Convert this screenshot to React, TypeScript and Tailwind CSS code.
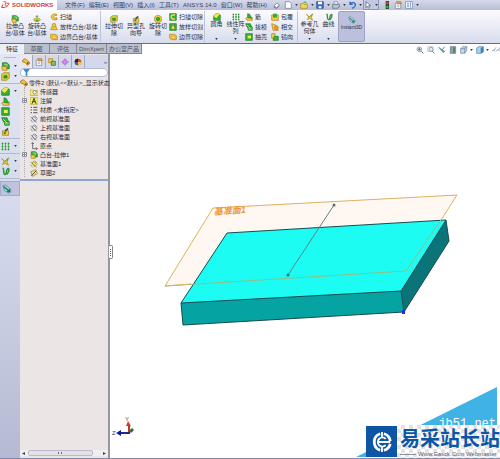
import clsx from 'clsx';
import { ReactNode } from 'react';

type IconName =
  | 'extrude'
  | 'revolve'
  | 'sweep'
  | 'loft'
  | 'boundary'
  | 'cut'
  | 'hole'
  | 'revolveCut'
  | 'sweepCut'
  | 'loftCut'
  | 'fillet'
  | 'pattern'
  | 'rib'
  | 'draft'
  | 'shell'
  | 'wrap'
  | 'intersect'
  | 'mirror'
  | 'reference'
  | 'curve'
  | 'instant'
  | 'help'
  | 'new'
  | 'open'
  | 'save'
  | 'print'
  | 'undo'
  | 'select'
  | 'light'
  | 'props'
  | 'options'
  | 'part'
  | 'config'
  | 'target'
  | 'display'
  | 'sensor'
  | 'note'
  | 'material'
  | 'plane'
  | 'origin'
  | 'plane1'
  | 'sketch'
  | 'zoomFit'
  | 'zoomArea'
  | 'prevView'
  | 'section'
  | 'orient'
  | 'style'
  | 'hide';

const green = '#35b034';
const darkGreen = '#1c7a28';
const yellow = '#f2cf3a';
const gold = '#a5801a';

const planeShape = (color: string, fill: string) => (
  <g stroke={color} fill={fill}>
    <path d="M3 4l3-2 4 5-3 3z" />
    <path d="M1 3l9 8M1 7l3 4M7 1l4 4" />
  </g>
);

const shapes: Record<IconName, ReactNode> = {
  extrude: (
    <>
      <path d="M2 1h6l3 3v5H5L2 6z" fill={green} stroke={darkGreen} />
      <path d="M1 6h6l1 5H2z" fill={yellow} stroke={gold} />
      <path d="M4 3h4v3" stroke="#c9f2b5" fill="none" />
    </>
  ),
  revolve: (
    <>
      <path d="M6 1v3M4 3l2-2 2 2" stroke={darkGreen} fill="none" />
      <path d="M1 7c0-3 10-3 10 0s-10 3-10 0z" fill={yellow} stroke={gold} />
      <path d="M4 7h4v3H4z" fill={green} />
    </>
  ),
  sweep: (
    <>
      <path d="M10 2C4 0 1 4 2 7s5 4 8 3V7C7 8 5 7 6 5s3-1 4-1z" fill={yellow} stroke={gold} />
      <circle cx="10" cy="8.500" r="1.500" fill="#e98a1d" />
    </>
  ),
  loft: (
    <>
      <path d="M4 1h4l1 5 2 4H1l2-4z" fill={yellow} stroke={gold} />
      <path d="M4 6h4" stroke={gold} />
    </>
  ),
  boundary: (
    <>
      <path d="M1 2h7l3 2v6H4L1 8z" fill={yellow} stroke={gold} />
      <path d="M4 5h5v3H4z" fill="#fff7c2" stroke="#e98a1d" />
    </>
  ),
  cut: (
    <>
      <path d="M1 3l3-2h7v7l-3 3H1z" fill="#d9d13c" stroke={gold} />
      <path d="M4 5h4v3H4z" fill={green} stroke={darkGreen} />
    </>
  ),
  hole: (
    <>
      <path d="M2 5h8v6H2z" fill={yellow} stroke={gold} />
      <path d="M5 4l4-3 1 2-4 4z" fill="#4a5340" />
      <circle cx="5" cy="8" r="1.500" fill="#47702a" />
    </>
  ),
  revolveCut: (
    <>
      <path d="M1 3c2-3 8-3 10 0v6c-2 3-8 3-10 0z" fill="#e4d83f" stroke={gold} />
      <circle cx="6" cy="6" r="2.500" fill={green} stroke={darkGreen} />
    </>
  ),
  sweepCut: (
    <>
      <path d="M1 1h10v10H1z" fill={green} stroke={darkGreen} />
      <path d="M9 3C3 2 2 6 4 8s4 1 5 1" stroke="#f6e65a" strokeWidth="2" fill="none" />
    </>
  ),
  loftCut: (
    <>
      <path d="M1 1h10v10H1z" fill={green} stroke={darkGreen} />
      <path d="M6 2l3 7H3z" fill="#eef08a" stroke={gold} />
    </>
  ),
  fillet: (
    <>
      <path d="M1 5c1-4 7-5 10-2v8H1z" fill={green} stroke={darkGreen} />
      <path d="M1 5c1-4 6-5 9-3L5 8z" fill="#f5e548" />
    </>
  ),
  pattern: (
    <g fill={darkGreen}>
      <path d="M1 1h2v2H1zM5 1h2v2H5zM9 1h2v2H9zM1 5h2v2H1zM5 5h2v2H5zM9 5h2v2H9zM1 9h2v2H1zM5 9h2v2H5zM9 9h2v2H9z" />
      <path d="M2 2v8M6 2v8M10 2v8" stroke={green} />
    </g>
  ),
  rib: (
    <>
      <path d="M1 8l4-2 6 1v4H3z" fill={yellow} stroke={gold} />
      <path d="M4 1l3 1 3 6-6-1z" fill={green} stroke={darkGreen} />
    </>
  ),
  draft: (
    <>
      <path d="M1 1h7l2 5H3z" fill={green} stroke={darkGreen} />
      <path d="M4 6h7v5H5z" fill="#60cf4b" stroke={darkGreen} />
      <path d="M3 3l5 5" stroke="#e4f7b0" />
    </>
  ),
  shell: (
    <>
      <path d="M1 1h10v10H1z" fill={green} stroke={darkGreen} />
      <path d="M4 4h5v4H4z" fill="#e8ef5c" />
    </>
  ),
  wrap: (
    <>
      <path d="M1 3h10v8H1z" fill={yellow} stroke={gold} />
      <path d="M3 1h6v6H3z" fill={green} />
    </>
  ),
  intersect: (
    <>
      <path d="M1 1l6 2 4 8H3z" fill={yellow} stroke="#b76b18" />
      <circle cx="8" cy="7" r="3" fill="#ee9b25" stroke={gold} />
    </>
  ),
  mirror: (
    <>
      <path d="M1 1h5v7H1z" fill={yellow} stroke={gold} />
      <path d="M5 5h6v6H3z" fill={green} stroke={darkGreen} />
    </>
  ),
  reference: (
    <>
      <path d="M1 2l4 4 5-5-2 6 2 4-5-3-3 2 2-4z" fill={yellow} stroke={gold} />
      <path d="M5 6l5-4" stroke="#4c9c36" />
    </>
  ),
  curve: (
    <path
      d="M2 2c3-1 0 7 3 8s1-8 5-8c2 3-1 5-2 8"
      stroke="#2c9a35"
      strokeWidth="2"
      fill="none"
    />
  ),
  instant: (
    <>
      <path d="M1 2l3-1 7 6-2 4-6-3z" fill="#a8dbe0" stroke="#548fa6" />
      <path d="M2 3l7 6M9 6v3H6" stroke="#1b7b4b" strokeWidth="1.500" fill="none" />
    </>
  ),
  help: (
    <>
      <path d="M2 6l5-4 4 3-5 5z" fill="#fff" stroke="#55617a" />
      <path d="M2 7v2l4 2 5-5" stroke="#3c485e" fill="none" />
    </>
  ),
  new: <path d="M2 1h6l3 3v7H2z" fill="#fff" stroke="#69758f" />,
  open: (
    <>
      <path d="M1 4h4l1 1h5v6H1z" fill="#f5d84d" stroke={gold} />
      <path d="M5 3c1-2 4-2 5 0" stroke={green} strokeWidth="1.500" fill="none" />
    </>
  ),
  save: (
    <>
      <path d="M1 1h10v10H1z" fill="#3f72c4" stroke="#234a8c" />
      <path d="M3 1h6v4H3zM4 8h4v3H4z" fill="#fff" />
    </>
  ),
  print: (
    <>
      <path d="M3 1h5l1 4H3z" fill="#fff" stroke="#77839b" />
      <path d="M1 5h10v4l-3 2H1z" fill="#b9c4d6" stroke="#5a6780" />
    </>
  ),
  undo: (
    <path
      d="M3 1v4h4M3 5c2-4 8-3 8 1s-3 4-5 5"
      stroke="#2c6cc2"
      strokeWidth="2"
      fill="none"
    />
  ),
  select: <path d="M3 1v9l2-2 2 3 1-1-1-3h3z" fill="#fff" stroke="#46527a" />,
  light: (
    <>
      <path d="M4 0h5v12H4z" fill="#2d4934" />
      <circle cx="6.500" cy="3" r="2" fill="#e33b2e" />
      <circle cx="6.500" cy="9" r="2" fill="#35b034" />
    </>
  ),
  props: (
    <>
      <path d="M2 3h8v8H2z" fill="#fff" stroke="#7c7f8c" />
      <path d="M4 1h6l1 3H5z" fill="#f0b04a" stroke="#a86d20" />
      <path d="M4 6h4M4 8h4" stroke="#8994aa" />
    </>
  ),
  options: (
    <>
      <path d="M1 1h10v10H1z" fill="#fff" stroke="#5c7fae" />
      <path d="M3 4h3M3 6h3M3 8h3M8 2v8" stroke="#4a75b4" />
    </>
  ),
  part: (
    <>
      <path d="M1 3l4-2 3 3 3 2v3l-3 2-3-4-4-1z" fill="#f4c53a" stroke="#80601a" />
      <circle cx="8.500" cy="8" r="1.500" fill="#7a4e15" />
    </>
  ),
  config: (
    <>
      <path d="M1 1h6v6H1z" fill={yellow} stroke={gold} />
      <path d="M5 5h6v6H5z" fill="#7ec769" stroke="#36523a" />
    </>
  ),
  target: (
    <>
      <path d="M6 0v12M0 6h12" stroke="#a865ce" />
      <circle cx="6" cy="6" r="3.500" fill="#d58be6" stroke="#9a62c4" />
    </>
  ),
  display: (
    <>
      <circle cx="6" cy="6" r="5" fill="#e8442c" />
      <path d="M6 6V1a5 5 0 0 0-5 5z" fill="#242424" />
      <path d="M6 6h5a5 5 0 0 1-5 5z" fill="#f4c52f" />
      <path d="M6 6v5a5 5 0 0 1-5-5z" fill="#3b60c4" />
    </>
  ),
  sensor: (
    <>
      <path d="M0 3h4l1 1h7v7H0z" fill="#f8ee8c" stroke="#a39a35" />
      <circle cx="7" cy="6.500" r="2.500" fill="#fff" stroke="#56624a" />
    </>
  ),
  note: (
    <>
      <path d="M0 1h12v10H0z" fill="#f7ee59" stroke="#b0a635" />
      <path d="M3 10l3-8 3 8M4 7h4" stroke="#3b4130" fill="none" strokeWidth="1.500" />
    </>
  ),
  material: (
    <path
      d="M1 2h2M1 6h2M1 10h2M5 2h6M5 6h6M5 10h6"
      stroke="#4c5160"
      strokeWidth="1.500"
    />
  ),
  plane: planeShape('#5c6474', 'none'),
  origin: <path d="M4 1v9h7M2 3l2-2 2 2M9 8l2 2-2 2" stroke="#333a4a" fill="none" />,
  plane1: planeShape('#8b7a22', '#f5e65a'),
  sketch: (
    <>
      <path d="M1 4l8-3 2 6-7 4z" fill="#f4e37a" stroke="#8b7a22" />
      <path d="M2 10l7-7" stroke="#4a5166" strokeWidth="1.500" />
    </>
  ),
  zoomFit: (
    <>
      <circle cx="5" cy="5" r="3.500" fill="#e8eef6" stroke="#6c7b92" />
      <path d="M8 8l3 3M3 5h4M5 3v4" stroke="#5f7391" strokeWidth="1.500" />
    </>
  ),
  zoomArea: (
    <>
      <path d="M1 1h8v7H1z" fill="none" stroke="#aab3c3" />
      <circle cx="6" cy="5" r="3" fill="#e8eef6" stroke="#6c7b92" />
      <path d="M8 8l3 3" stroke="#5f7391" strokeWidth="1.500" />
    </>
  ),
  prevView: (
    <>
      <path d="M1 2l7 8 2-2-6-4z" fill="#73aace" stroke="#4680a8" />
      <path d="M10 1L6 6" stroke="#3f9d96" strokeWidth="1.500" />
    </>
  ),
  section: (
    <>
      <path d="M2 1h8v10H2z" fill="#8fa4a1" stroke="#5e7372" />
      <path d="M6 2h3v8H6z" fill="#64807e" />
    </>
  ),
  orient: (
    <>
      <path d="M1 4l3-3h6v6l-3 4H1z" fill="#c6d9ea" stroke="#5b7c9e" />
      <path d="M1 4h6v7M7 4l3-3" stroke="#5b7c9e" fill="none" />
    </>
  ),
  style: (
    <>
      <path d="M1 3l3-2h7v8l-3 2H1z" fill="#a8d2ee" stroke="#4a7ea8" />
      <path d="M7 3l4-2v8l-4 2z" fill="#3f83bd" />
    </>
  ),
  hide: (
    <path
      d="M0 8c1-3 3-3 4 0M6 8c1-3 4-3 5 0M3 7l3-5M10 6l2-4"
      stroke="#74808f"
      fill="none"
    />
  ),
};

const Icon = ({ name, className }: { name: IconName; className?: string }) => (
  <svg viewBox="0 0 12 12" className={clsx('shrink-0', className ?? 'size-2')} aria-hidden>
    {shapes[name]}
  </svg>
);

const Caret = () => (
  <svg viewBox="0 0 4 3" className="h-[2px] w-[3px] shrink-0" aria-hidden>
    <path d="M0 0h4L2 3z" fill="#333a4a" />
  </svg>
);

const menus = ['文件(F)', '编辑(E)', '视图(V)', '插入(I)', '工具(T)', 'ANSYS 14.0', '窗口(W)', '帮助(H)'];

const quickTools: { icon: IconName; active?: boolean }[] = [
  { icon: 'new' },
  { icon: 'open' },
  { icon: 'save' },
  { icon: 'print' },
  { icon: 'undo' },
  { icon: 'select', active: true },
];

const TitleBar = () => (
  <header className="flex h-[10px] items-center bg-linear-to-b from-[#d5d9ea] to-[#b9bed6]">
    <div className="flex h-full w-[57px] shrink-0 items-center gap-[2px] bg-white pl-px text-[#cf3a32]">
      <svg viewBox="0 0 14 12" className="h-2 w-[9px]" aria-hidden>
        <path
          d="M4 1h3c2 1 1 3-1 4 3 1 2 5-1 5H1l2-5M9 4c3-2 5 0 3 1s-2 4-4 4"
          stroke="#cf3a32"
          strokeWidth="1.500"
          fill="none"
        />
      </svg>
      <span className="text-[6px] font-bold">SOLIDWORKS</span>
    </div>
    <nav className="flex w-[216px] shrink-0 items-center justify-between pr-[6px] pl-2 whitespace-nowrap text-[#39415c]">
      {menus.map(menu => (
        <button key={menu} type="button">
          {menu}
        </button>
      ))}
    </nav>
    <Icon name="help" className="mr-[3px] size-[7px]" />
    <div className="flex h-full items-center">
      {quickTools.map(({ icon, active }) => (
        <button
          key={icon}
          type="button"
          aria-label={icon}
          className={clsx(
            'flex h-full w-[16px] items-center justify-center gap-[3px]',
            active && 'border border-t-0 border-[#8f95b8] bg-[#c3c8e2]'
          )}
        >
          <Icon name={icon} />
          <Caret />
        </button>
      ))}
    </div>
    <div className="ml-[4px] flex items-center gap-[3px]">
      <Icon name="light" />
      <Icon name="props" />
      <Icon name="options" />
      <Caret />
    </div>
  </header>
);

type Tool = { icon: IconName; label: string };

const LargeTool = ({ icon, label, caret }: Tool & { caret?: boolean }) => (
  <button
    type="button"
    className={clsx(
      'flex h-full w-[22px] flex-col items-center text-center',
      caret ? 'pt-[2px]' : 'pt-[4px]'
    )}
  >
    <Icon name={icon} />
    <span className="leading-[7px] whitespace-pre">{label}</span>
    {caret && (
      <span className="mt-auto mb-[2px] flex">
        <Caret />
      </span>
    )}
  </button>
);

const ToolStack = ({ tools, className }: { tools: Tool[]; className: string }) => (
  <div className={clsx('flex h-full flex-col justify-between pt-[2px] pb-px', className)}>
    {tools.map(({ icon, label }) => (
      <button key={label} type="button" className="flex items-center gap-[2px] whitespace-nowrap">
        <Icon name={icon} />
        {label}
      </button>
    ))}
  </div>
);

const Divider = () => <div className="mx-[2px] h-full w-px shrink-0 bg-[#bfc3d6]" />;

const Ribbon = () => (
  <div className="flex h-[34px] items-center border-b border-[#666b8b] bg-linear-to-b from-[#fbfbfe] to-[#d9dcec] py-px pl-[4px] text-[#2b3042]">
    <LargeTool icon="extrude" label={'拉伸凸\n台/基体'} />
    <LargeTool icon="revolve" label={'旋转凸\n台/基体'} />
    <ToolStack
      className="w-[50px] pl-[2px]"
      tools={[
        { icon: 'sweep', label: '扫描' },
        { icon: 'loft', label: '放样凸台/基体' },
        { icon: 'boundary', label: '边界凸台/基体' },
      ]}
    />
    <Divider />
    <LargeTool icon="cut" label={'拉伸切\n除'} />
    <LargeTool icon="hole" label={'异型孔\n向导'} />
    <LargeTool icon="revolveCut" label={'旋转切\n除'} />
    <ToolStack
      className="w-[33px]"
      tools={[
        { icon: 'sweepCut', label: '扫描切除' },
        { icon: 'loftCut', label: '放样切割' },
        { icon: 'boundary', label: '边界切除' },
      ]}
    />
    <Divider />
    <div className="flex h-full w-[38px] justify-between">
      <LargeTool icon="fillet" label="圆角" caret />
      <LargeTool icon="pattern" label={'线性阵\n列'} caret />
    </div>
    <ToolStack
      className="w-[26px]"
      tools={[
        { icon: 'rib', label: '筋' },
        { icon: 'draft', label: '拔模' },
        { icon: 'shell', label: '抽壳' },
      ]}
    />
    <ToolStack
      className="w-[24px]"
      tools={[
        { icon: 'wrap', label: '包覆' },
        { icon: 'intersect', label: '相交' },
        { icon: 'mirror', label: '镜向' },
      ]}
    />
    <Divider />
    <div className="flex h-full w-[38px] justify-between">
      <LargeTool icon="reference" label={'参考几\n何体'} caret />
      <LargeTool icon="curve" label="曲线" caret />
    </div>
    <button
      type="button"
      className="flex h-[31px] w-[27px] flex-col items-center rounded-[2px] border border-[#9ea2c4] bg-[#bcbfdd] pt-[4px]"
    >
      <Icon name="instant" />
      <span className="text-[5px] leading-[7px]">Instant3D</span>
    </button>
  </div>
);

const tabs = [
  { label: '特征', width: 'w-[24px]' },
  { label: '草图', width: 'w-[26px]' },
  { label: '评估', width: 'w-[27px]' },
  { label: 'DimXpert', width: 'w-[30px]' },
  { label: '办公室产品', width: 'w-[35px]' },
];

const Tabs = () => (
  <div className="flex">
    {tabs.map(({ label, width }, i) => (
      <button
        key={label}
        type="button"
        className={clsx(
          'flex items-center justify-center whitespace-nowrap',
          width,
          i === 0
            ? 'bg-[#eceef6] text-[#23283a]'
            : 'border-r border-b border-[#82869c] bg-[#bbbfcd] text-[#4c5163]'
        )}
      >
        {label}
      </button>
    ))}
  </div>
);

const viewTools: { icon: IconName; caret?: boolean }[] = [
  { icon: 'zoomFit' },
  { icon: 'zoomArea' },
  { icon: 'prevView' },
  { icon: 'section' },
  { icon: 'orient', caret: true },
  { icon: 'style', caret: true },
  { icon: 'hide' },
];

const ViewTools = () => (
  <div className="flex items-end gap-[3px]">
    {viewTools.map(({ icon, caret }) => (
      <button key={icon} type="button" aria-label={icon} className="flex items-center gap-[2px]">
        <Icon name={icon} />
        {caret && <Caret />}
      </button>
    ))}
  </div>
);

const sideGroups: { icon: IconName; caret?: boolean }[][] = [
  [
    { icon: 'extrude', caret: true },
    { icon: 'cut', caret: true },
  ],
  [
    { icon: 'fillet', caret: true },
    { icon: 'rib' },
    { icon: 'shell' },
    { icon: 'draft' },
    { icon: 'hole' },
  ],
  [{ icon: 'pattern', caret: true }],
  [
    { icon: 'reference', caret: true },
    { icon: 'curve', caret: true },
  ],
];

const SideBar = () => (
  <aside className="w-5 shrink-0 bg-linear-to-b from-[#e3e7f4] via-[#d0d6e9] to-[#b5b9d2] pt-[3px]">
    <div className="mx-1 mb-[3px] h-px bg-[#b3b8cf]" />
    {sideGroups.map((group, i) => (
      <div key={i} className="mb-[2px] border-b border-[#b3b8cf] pb-[2px]">
        {group.map(({ icon, caret }) => (
          <button
            key={icon}
            type="button"
            aria-label={icon}
            className="flex h-[10px] w-full items-center gap-[4px] pl-px"
          >
            <Icon name={icon} className="size-[9px]" />
            {caret && <Caret />}
          </button>
        ))}
      </div>
    ))}
    <button
      type="button"
      aria-label="Instant3D"
      className="flex h-[15px] w-full items-center border border-[#a6abc9] bg-[#bfc3de] pl-px"
    >
      <Icon name="instant" className="size-[10px]" />
    </button>
  </aside>
);

const treeItems: { icon: IconName; label: string; expandable?: boolean }[] = [
  { icon: 'sensor', label: '传感器' },
  { icon: 'note', label: '注解', expandable: true },
  { icon: 'material', label: '材质 <未指定>' },
  { icon: 'plane', label: '前视基准面' },
  { icon: 'plane', label: '上视基准面' },
  { icon: 'plane', label: '右视基准面' },
  { icon: 'origin', label: '原点' },
  { icon: 'extrude', label: '凸台-拉伸1', expandable: true },
  { icon: 'plane1', label: '基准面1' },
  { icon: 'sketch', label: '草图2' },
];

const panelTabs: IconName[] = ['part', 'props', 'config', 'target', 'display'];

const FeatureTree = () => (
  <section className="flex w-[90px] shrink-0 flex-col border-r-2 border-[#96969e] bg-[#ebe6e5] pt-px">
    <div className="flex h-[13px] items-center bg-[#d3d9ea]">
      {panelTabs.map((icon, i) => (
        <button
          key={icon}
          type="button"
          aria-label={icon}
          className={clsx(
            'flex h-full w-[13px] items-center justify-center border-r border-[#a3a9c0]',
            i === 0 && 'bg-[#ebe9ee]'
          )}
        >
          <Icon name={icon} />
        </button>
      ))}
      <button type="button" className="ml-auto pr-px text-[#59617c]">
        »
      </button>
    </div>
    <label className="flex h-[9px] items-center rounded-[4px] border border-[#b4bad0] bg-white pl-[2px]">
      <svg viewBox="0 0 8 8" className="size-[7px] shrink-0" aria-hidden>
        <path d="M0 0h8L5 4v4H3V4z" fill="#3d8fd4" />
      </svg>
      <input type="text" aria-label="Filter" className="h-full w-full min-w-0 outline-none" />
    </label>
    <div className="border-b-2 border-[#8ea6d4] pt-px pb-[2px] text-[#262a36]">
      <div className="flex h-[9px] items-center gap-px whitespace-nowrap">
        <Icon name="part" />
        零件2 (默认&lt;&lt;默认&gt;_显示状态
      </div>
      <ul className="ml-[4px] border-l border-dotted border-[#aaa6ab]">
        {treeItems.map(({ icon, label, expandable }) => (
          <li key={label} className="flex h-[9px] items-center gap-[2px] whitespace-nowrap">
            <span className="-ml-[3px] flex w-[6px] items-center">
              {expandable && (
                <svg viewBox="0 0 5 5" className="size-[5px] bg-white" aria-hidden>
                  <path d="M.5.5h4v4h-4zM1 2.500h3M2.500 1v3" stroke="#8b8f9c" fill="none" />
                </svg>
              )}
            </span>
            <Icon name={icon} />
            {label}
          </li>
        ))}
      </ul>
    </div>
    <div className="mt-auto mb-[2px] flex h-[6px] items-center justify-between bg-[#efeff2] px-[2px]">
      <svg viewBox="0 0 4 4" className="size-[3px]" aria-hidden>
        <path d="M4 0v4L0 2z" fill="#3c4152" />
      </svg>
      <div className="mr-2 flex h-full w-[65px] items-center justify-center rounded-[2px] border border-[#b9bbc8] bg-[#e2e3ea]">
        <div className="h-[2px] w-[4px] border-x border-[#6d7183]" />
      </div>
      <svg viewBox="0 0 4 4" className="size-[3px]" aria-hidden>
        <path d="M0 0v4l4-2z" fill="#3c4152" />
      </svg>
    </div>
  </section>
);

const Model = () => (
  <svg
    viewBox="0 0 300 140"
    className="mt-[136px] ml-[50px] h-[140px] w-[300px]"
    aria-label="凸台-拉伸1"
  >
    <path d="M53 18L297 5l-51 76L5 96z" fill="#fff8f2" />
    <path d="M67 43l219-13-45 71L21 113z" fill="#1dfcf3" />
    <path d="M21 113l220-12 3 21-221 13z" fill="#06a3a3" />
    <path d="M241 101l45-71 3 21-45 71z" fill="#0b7478" />
    <path
      d="M67 43l219-13-45 71L21 113zM241 101l3 21M21 113l2 22 221-13 45-71-3-21"
      stroke="#164b50"
      fill="none"
    />
    <path d="M5 96L53 18 297 5l-16 25" stroke="#dcb25f" fill="none" />
    <path d="M281 30l-35 51L5 96" stroke="#8fbf86" fill="none" />
    <path d="M5 96l26-2" stroke="#dcb25f" />
    <path d="M174 15l-46 70" stroke="#5b8580" />
    <circle cx="174" cy="15" r="1.500" fill="#666" />
    <circle cx="128" cy="85" r="1.500" fill="#19777c" />
    <path d="M242 120h3v4h-3z" fill="#1d36d0" />
    <text
      x="54"
      y="25"
      fill="#ee9638"
      fontSize="9"
      fontWeight="700"
      fontStyle="italic"
      transform="rotate(-4 54 25)"
    >
      基准面1
    </text>
  </svg>
);

const Triad = () => (
  <svg viewBox="0 0 24 22" className="absolute bottom-5 left-[2px] h-[22px] w-[24px]" aria-hidden>
    <text x="13" y="5" fontSize="6" fill="#66454a">
      Y
    </text>
    <text x="0" y="19" fontSize="6" fill="#35395c">
      Z
    </text>
    <path d="M17 17V9" stroke="#b8382e" strokeWidth="2" />
    <path d="M14 10l2-5 3 5z" fill="#d03a2e" />
    <path d="M18 16l3-3" stroke="#3e6b2c" strokeWidth="3" />
    <path d="M18 17H8" stroke="#1f2a8c" strokeWidth="2" />
    <path d="M9 14v6l-5-3z" fill="#151c96" />
  </svg>
);

const Watermark = () => (
  <div className="absolute right-0 bottom-0 h-[72px] w-[144px] overflow-hidden">
    <svg viewBox="0 0 144 72" className="absolute inset-0" aria-hidden>
      <path d="M0 71L141 1v70z" fill="#40b2e6" />
    </svg>
    <div className="absolute right-1 bottom-[27px] font-['Liberation_Mono','Noto_Sans_CJK_SC',monospace] text-[12px] leading-[14px] text-white">
      jb51.net
    </div>
    <div className="absolute right-0 bottom-0 flex h-[33px] w-[134px] items-center bg-white">
      <div className="flex size-[31px] shrink-0 items-center justify-center bg-[#0d56a6]">
        <svg viewBox="0 0 24 24" className="size-[22px]" aria-hidden>
          <path
            d="M10 3a9.500 9.500 0 0 0 0 18M14 3a9.500 9.500 0 0 1 7 8M21 14a9.500 9.500 0 0 1-7 7"
            stroke="#fff"
            strokeWidth="3"
            fill="none"
          />
          <path
            d="M16 8.500a5 5 0 1 0 0 7M7 12h14M12 1v6M12 17v6"
            stroke="#fff"
            strokeWidth="2"
            fill="none"
          />
        </svg>
      </div>
      <div className="h-full flex-1 bg-[repeating-conic-gradient(#e3e3e5_0_25%,#fff_0_50%)] bg-size-[8px_8px] pt-[3px] pl-[3px] whitespace-nowrap">
        <div className="text-[20px] leading-[23px] font-bold text-[#0d56a6]">易采站长站</div>
        <div className="flex items-center gap-[2px] text-[6px] leading-[6px] text-[#5d6066]">
          <span className="h-px w-4 bg-[#8c8f96]" />
          Www.Easck.Com Webmaster
        </div>
      </div>
    </div>
  </div>
);

const Viewport = () => (
  <main className="relative min-w-0 flex-1 bg-white">
    <Model />
    {/* splitter grip */}
    <div className="absolute top-[191px] -left-px flex h-[14px] w-[4px] items-center rounded-r-[2px] border border-l-0 border-[#85858d] bg-white">
      <span className="h-[7px] w-[2px] border-r border-dotted border-[#55555d]" />
    </div>
    <Triad />
    <Watermark />
  </main>
);

const App = () => (
  <div className="flex min-h-screen flex-col bg-white font-['Liberation_Sans','Noto_Sans_CJK_SC',sans-serif] text-[6px] leading-[8px]">
    <TitleBar />
    <Ribbon />
    <div className="flex h-[10px] justify-between">
      <Tabs />
      <ViewTools />
    </div>
    <div className="flex flex-1">
      <SideBar />
      <FeatureTree />
      <Viewport />
    </div>
    <div className="h-px bg-[#8488a8]" />
  </div>
);

export default App;
